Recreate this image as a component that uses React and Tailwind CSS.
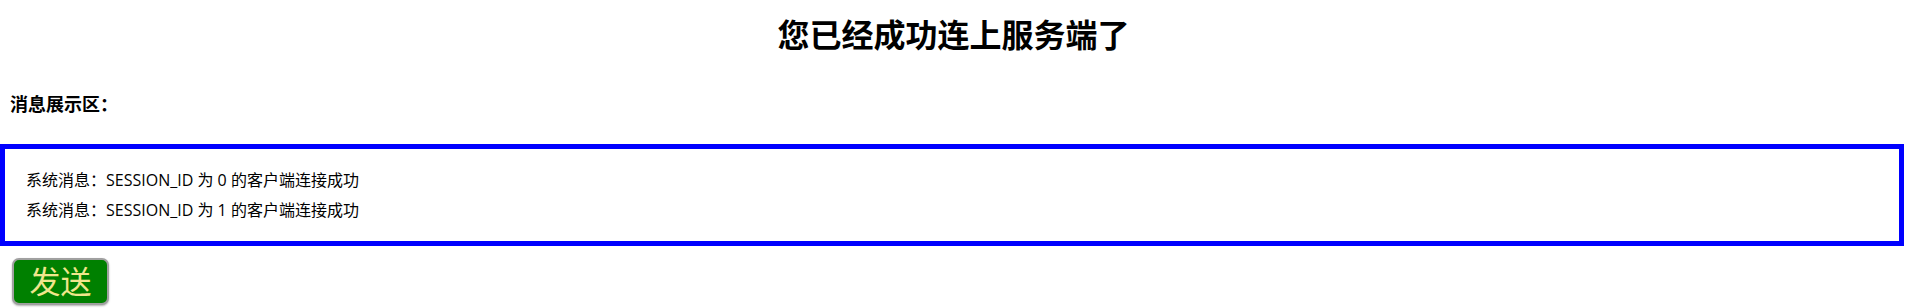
export default function App() {
  const messages = [
    "系统消息：SESSION_ID 为 0 的客户端连接成功",
    "系统消息：SESSION_ID 为 1 的客户端连接成功",
  ];

  return (
    <div className="w-[1907px] h-[308px] bg-white text-black font-['Open_Sans','Noto_Sans_CJK_SC',sans-serif]">
      <h1 className="pt-[15px] h-[55px] text-center text-[32px] leading-[40px] font-bold">
        您已经成功连上服务端了
      </h1>
      <div className="mt-[34px] pl-[10px] text-[18px] leading-[30px] font-bold">消息展示区：</div>
      <div className="mt-[25px] w-[1904px] h-[102px] border-[5px] border-[#0000ff] py-4 pl-[21px]">
        {messages.map((msg, idx) => (
          <div key={idx} className="text-[16px] leading-[30px]">
            {msg}
          </div>
        ))}
      </div>
      <button className="mt-[12px] ml-[12px] w-[97px] h-[47px] rounded-[7px] border-2 border-[#a0a0a0] bg-[#008000] text-[31px] leading-none text-[#f0e68c] shadow-[0_1px_2px_rgba(0,0,0,0.3)]">
        发送
      </button>
    </div>
  );
}
